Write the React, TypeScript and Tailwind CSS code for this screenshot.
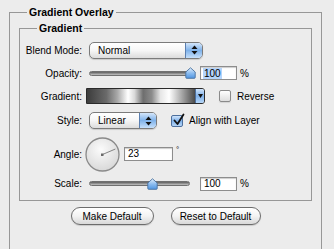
import React from "react";

const font = { fontFamily: '"Liberation Sans", Arial, sans-serif' };

function UpDown() {
    return (
        <svg width="7" height="10" viewBox="0 0 7 10">
            <path d="M3.5 0.5 L6.5 4 L0.5 4 Z" fill="#111" />
            <path d="M3.5 9.5 L6.5 6 L0.5 6 Z" fill="#111" />
        </svg>
    );
}

function Select({ value, width }: { value: string; width: string }) {
    return (
        <div className={`${width} h-[17px] ml-[3px] flex items-stretch rounded-[5px] border border-[#7b7b7b] bg-linear-to-b from-white via-[#f6f6f6] to-[#dcdcdc] shadow-[0_1px_1px_rgba(0,0,0,0.15)] overflow-hidden`}>
            <span className="flex-1 pl-[8px] flex items-center text-[10px] text-black">{value}</span>
            <span className="w-[17px] flex items-center justify-center border-l border-[#5b7fb0] bg-linear-to-b from-[#d4e6fa] via-[#7fb2ea] to-[#c6e0fb]">
                <UpDown />
            </span>
        </div>
    );
}

function Slider({ pos }: { pos: number }) {
    return (
        <div className="relative w-[103px] h-[14px] ml-[3px] flex items-center">
            <div className="w-[101px] h-[5px] rounded-full bg-linear-to-b from-[#5e5e5e] via-[#8f8f8f] to-[#c4c4c4] border border-[#707070]" />
            <svg className="absolute top-[1px]" style={{ left: pos - 5 }} width="11" height="12" viewBox="0 0 11 12">
                <defs>
                    <linearGradient id={`th${pos}`} x1="0" y1="0" x2="0" y2="1">
                        <stop offset="0" stopColor="#e3f0fd" />
                        <stop offset="0.5" stopColor="#8dbdf0" />
                        <stop offset="1" stopColor="#4f95e2" />
                    </linearGradient>
                </defs>
                <path d="M5.5 0.8 L10.2 5 L10.2 10.5 Q10.2 11.3 9.4 11.3 L1.6 11.3 Q0.8 11.3 0.8 10.5 L0.8 5 Z" fill={`url(#th${pos})`} stroke="#476f9e" strokeWidth="0.9" />
            </svg>
        </div>
    );
}

function NumBox({ value, width, selected }: { value: string; width: string; selected?: boolean }) {
    return (
        <div className={`${width} h-[14px] bg-white border border-[#8d8d8d] shadow-[inset_0_1px_1px_rgba(0,0,0,0.2)] flex items-center pl-[3px] text-[10px] text-black`}>
            <span className={selected ? "bg-[#b4d4fb] px-[1px] -ml-[1px] leading-[11px]" : "leading-[11px]"}>{value}</span>
        </div>
    );
}

function Checkbox({ checked }: { checked?: boolean }) {
    if (checked) {
        return (
            <div className="w-[12px] h-[12px] rounded-[2px] border border-[#4d6f9c] bg-linear-to-b from-[#d0e4fa] via-[#7fb1ea] to-[#b6d6f7] relative">
                <svg className="absolute -top-[3px] left-[1px]" width="12" height="13" viewBox="0 0 12 13">
                    <path d="M1.5 7.5 L4.5 11 L10.5 1.5" fill="none" stroke="#111" strokeWidth="1.8" strokeLinecap="round" strokeLinejoin="round" />
                </svg>
            </div>
        );
    }
    return <div className="w-[12px] h-[12px] rounded-[2px] border border-[#8a8a8a] bg-linear-to-b from-white to-[#dedede] shadow-[0_1px_1px_rgba(0,0,0,0.1)]" />;
}

function Label({ text }: { text: string }) {
    return <div className="w-[62px] text-right text-[10px] text-black whitespace-nowrap">{text}</div>;
}

function Button({ text, width }: { text: string; width: string }) {
    return (
        <button className={`${width} h-[18px] rounded-full border border-[#6c6c6c] bg-linear-to-b from-white via-[#f3f3f3] to-[#d9d9d9] text-[10px] text-black flex items-center justify-center shadow-[0_1px_1px_rgba(0,0,0,0.15)]`}>
            {text}
        </button>
    );
}

export default function App() {
    const angle = 23;
    const rad = (angle * Math.PI) / 180;

    return (
        <div className="w-[334px] h-[249px] overflow-hidden bg-[#ececec]" style={font}>
            <fieldset className="ml-[9px] mt-[5px] w-[313px] h-[260px] border-t border-l border-r border-[#979797]">
                <legend className="ml-[17px] px-[2px] h-[14px] leading-[14px] text-[10.5px] font-bold text-black">Gradient Overlay</legend>

                <fieldset className="ml-[9px] mt-[2px] w-[293px] border border-[#979797] pt-[5px] pb-[7px]">
                    <legend className="ml-[17px] px-[2px] h-[14px] leading-[14px] text-[10.5px] font-bold text-black">Gradient</legend>

                    {/* blend mode */}
                    <div className="h-[20px] flex items-center gap-[4px]">
                        <Label text="Blend Mode:" />
                        <Select value="Normal" width="w-[114px]" />
                    </div>

                    {/* opacity */}
                    <div className="h-[26px] flex items-center gap-[4px]">
                        <Label text="Opacity:" />
                        <Slider pos={101} />
                        <div className="ml-[4px] flex items-center gap-[3px]">
                            <NumBox value="100" width="w-[37px]" selected />
                            <span className="text-[10px] text-black">%</span>
                        </div>
                    </div>

                    {/* gradient */}
                    <div className="h-[20px] flex items-center gap-[4px]">
                        <Label text="Gradient:" />
                        <div className="w-[119px] h-[16px] flex border border-[#2a2a2a] rounded-r-[3px] overflow-hidden">
                            <div className="flex-1 bg-[linear-gradient(to_right,#3c3c3c_0%,#6a6a6a_18%,#a8a8a8_28%,#ffffff_38%,#d9d9d9_44%,#6e6e6e_52%,#8c8c8c_60%,#e6e6e6_68%,#ffffff_76%,#c4c4c4_84%,#4a4a4a_100%)]" />
                            <div className="w-[9px] flex items-center justify-center border-l border-[#4d6f9c] bg-linear-to-b from-[#d0e4fa] via-[#7fb1ea] to-[#b6d6f7]">
                                <svg width="5" height="4" viewBox="0 0 5 4">
                                    <path d="M0 0 L5 0 L2.5 4 Z" fill="#111" />
                                </svg>
                            </div>
                        </div>
                        <div className="ml-[10px] flex items-center gap-[6px]">
                            <Checkbox />
                            <span className="text-[10px] text-black">Reverse</span>
                        </div>
                    </div>

                    {/* style */}
                    <div className="h-[29px] flex items-center gap-[4px]">
                        <Label text="Style:" />
                        <Select value="Linear" width="w-[68px]" />
                        <div className="ml-[10px] flex items-center gap-[6px]">
                            <Checkbox checked />
                            <span className="text-[10px] text-black">Align with Layer</span>
                        </div>
                    </div>

                    {/* angle */}
                    <div className="h-[39px] flex items-center gap-[4px]">
                        <Label text="Angle:" />
                        <svg width="35" height="35" viewBox="0 0 35 35" className="-ml-[1px]">
                            <defs>
                                <radialGradient id="dial" cx="0.45" cy="0.35" r="0.7">
                                    <stop offset="0" stopColor="#fbfbfb" />
                                    <stop offset="1" stopColor="#d6d6d6" />
                                </radialGradient>
                            </defs>
                            <circle cx="17.5" cy="17.5" r="16.5" fill="url(#dial)" stroke="#8a8a8a" strokeWidth="1.3" />
                            <line x1="17.5" y1="17.5" x2={17.5 + 14 * Math.cos(rad)} y2={17.5 - 14 * Math.sin(rad)} stroke="#6a6a6a" strokeWidth="0.8" />
                            <rect x="16" y="16.5" width="2.5" height="2.5" fill="#6a6a6a" />
                        </svg>
                        <div className="flex items-start gap-[3px] -mt-[2px]">
                            <NumBox value="23" width="w-[49px]" />
                            <span className="text-[8px] leading-[8px] text-black -mt-[1px]">°</span>
                        </div>
                    </div>

                    {/* scale */}
                    <div className="h-[19px] flex items-center gap-[4px]">
                        <Label text="Scale:" />
                        <Slider pos={63} />
                        <div className="ml-[4px] flex items-center gap-[3px]">
                            <NumBox value="100" width="w-[37px]" />
                            <span className="text-[10px] text-black">%</span>
                        </div>
                    </div>
                </fieldset>

                <div className="mt-[6px] flex justify-center gap-[17px]">
                    <Button text="Make Default" width="w-[83px]" />
                    <Button text="Reset to Default" width="w-[90px]" />
                </div>
            </fieldset>
        </div>
    );
}
